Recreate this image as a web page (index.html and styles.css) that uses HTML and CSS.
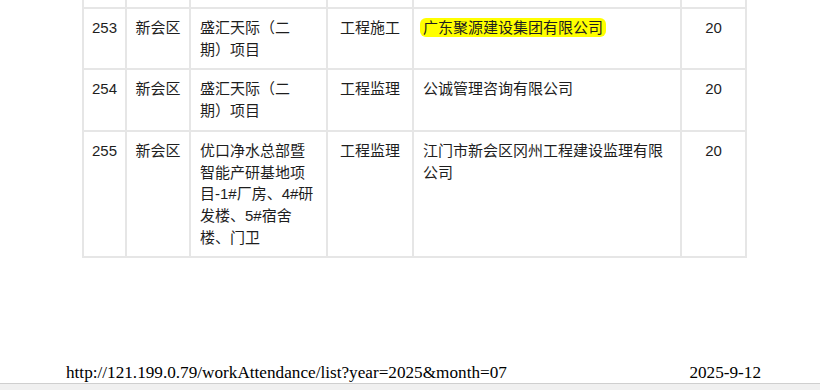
FILE: index.html
```html
<!DOCTYPE html>
<html lang="zh-CN">
<head>
<meta charset="utf-8">
<title>考勤列表</title>
<link rel="stylesheet" href="styles.css">
</head>
<body>
<div class="page">
  <div class="sheet">
    <table class="list">
      <colgroup>
        <col class="c-no">
        <col class="c-area">
        <col class="c-proj">
        <col class="c-type">
        <col class="c-unit">
        <col class="c-score">
      </colgroup>
      <tbody>
        <tr class="partial">
          <td></td><td></td><td></td><td></td><td></td><td></td>
        </tr>
        <tr>
          <td class="center">253</td>
          <td class="center">新会区</td>
          <td>盛汇天际（二期）项目</td>
          <td class="center">工程施工</td>
          <td><mark class="hl">广东聚源建设集团有限公司</mark></td>
          <td class="center">20</td>
        </tr>
        <tr>
          <td class="center">254</td>
          <td class="center">新会区</td>
          <td>盛汇天际（二期）项目</td>
          <td class="center">工程监理</td>
          <td>公诚管理咨询有限公司</td>
          <td class="center">20</td>
        </tr>
        <tr>
          <td class="center">255</td>
          <td class="center">新会区</td>
          <td>优口净水总部暨智能产研基地项目-1#厂房、4#研发楼、5#宿舍楼、门卫</td>
          <td class="center">工程监理</td>
          <td>江门市新会区冈州工程建设监理有限公司</td>
          <td class="center">20</td>
        </tr>
      </tbody>
    </table>
  </div>
  <div class="spacer"></div>
  <div class="print-footer">
    <span class="url">http://121.199.0.79/workAttendance/list?year=2025&amp;month=07</span>
    <span class="date">2025-9-12</span>
  </div>
  <div class="bottom-bar"></div>
</div>
</body>
</html>
```

FILE: styles.css
```css
html, body {
  margin: 0;
  padding: 0;
  background: #ffffff;
}

.page {
  width: 820px;
  height: 390px;
  display: flex;
  flex-direction: column;
  overflow: hidden;
}

.sheet {
  padding-left: 82px;
}

.list {
  border-collapse: collapse;
  table-layout: fixed;
  width: 663px;
  font-family: "Liberation Sans", "Noto Sans CJK SC", sans-serif;
  font-size: 15px;
  line-height: 21.7px;
  color: #1e1e1e;
  text-spacing-trim: space-all;
}

.c-no { width: 43px; }
.c-area { width: 64px; }
.c-proj { width: 137px; }
.c-type { width: 86px; }
.c-unit { width: 268px; }
.c-score { width: 65px; }

.list td {
  border: 2px solid #e6e6e6;
  padding: 8px 9px 8px 9px;
  vertical-align: top;
  text-align: left;
  word-break: normal;
}

.list td.center {
  text-align: center;
  padding-left: 4px;
  padding-right: 4px;
}

.list tr.partial td {
  border-top: none;
  padding: 0;
  height: 7px;
}

.hl {
  background: #ffff00;
  color: #1e1e1e;
  border-radius: 6px;
  padding: 1px 3px;
  margin-left: -3px;
}

.spacer {
  flex: 1;
}

.print-footer {
  display: flex;
  justify-content: space-between;
  align-items: baseline;
  padding: 0 59px 0 66px;
  font-family: "Liberation Serif", serif;
  font-size: 17.2px;
  line-height: 18px;
  color: #000000;
  margin-bottom: 1px;
}

.bottom-bar {
  height: 6px;
  border-top: 1px solid #cfcfcf;
  background: #f0f0f0;
}
```
